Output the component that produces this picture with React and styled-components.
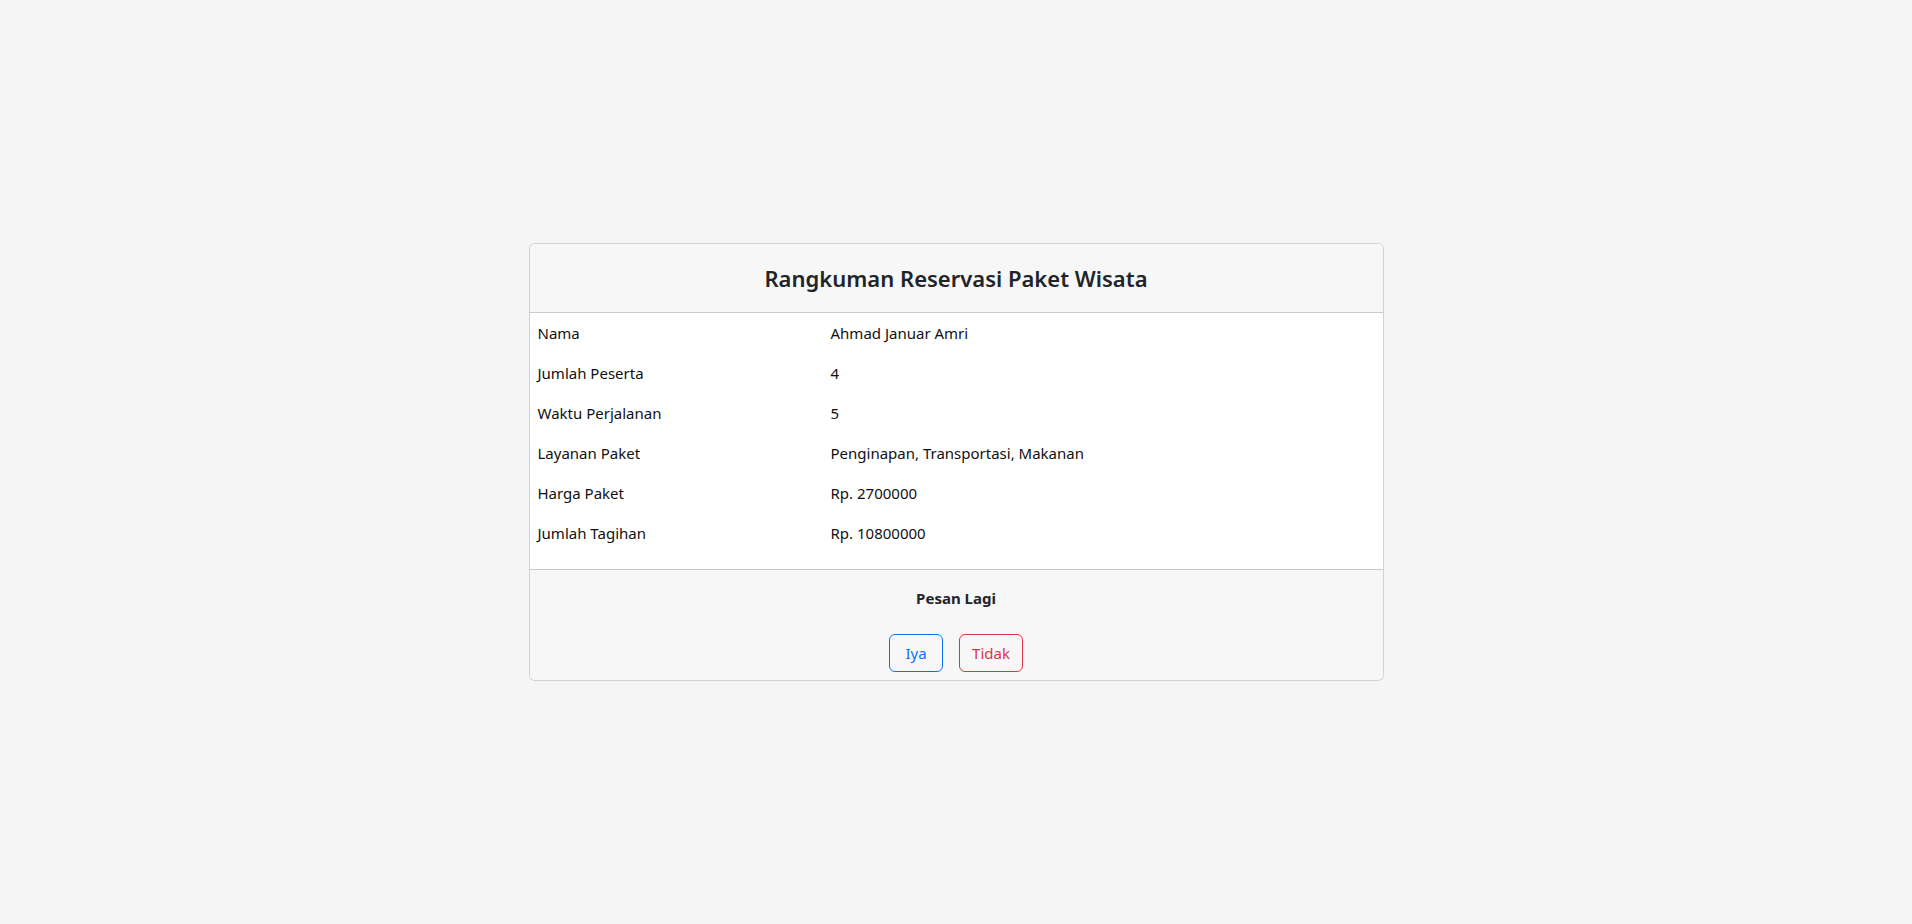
import React from "react";
import styled, { createGlobalStyle } from "styled-components";

const GlobalStyle = createGlobalStyle`
  html, body {
    margin: 0;
    padding: 0;
    height: 100%;
    background-color: #f5f5f5;
    font-family: "Noto Sans", "Open Sans", sans-serif;
    font-size: 15px;
    color: #212529;
  }
  #root {
    min-height: 100vh;
  }
`;

const Page = styled.div`
  min-height: 100vh;
  display: flex;
  align-items: center;
  justify-content: center;
`;

const Card = styled.div`
  box-sizing: border-box;
  width: 855px;
  background-color: #fff;
  border: 1px solid rgba(0, 0, 0, 0.175);
  border-radius: 6px;
  overflow: hidden;
`;

const CardHeader = styled.div`
  background-color: #f7f7f7;
  border-bottom: 1px solid rgba(0, 0, 0, 0.175);
  height: 68px;
  display: flex;
  align-items: center;
  justify-content: center;
  & h4 {
    margin: 0;
    font-size: 22px;
    font-weight: 600;
    line-height: 1.2;
  }
`;

const SummaryTable = styled.table`
  width: 100%;
  border-collapse: collapse;
  margin-bottom: 16px;
  & td {
    padding: 8px;
    line-height: 24px;
    vertical-align: top;
    color: #111;
  }
  & td.label {
    width: 277px;
  }
`;

const CardFooter = styled.div`
  background-color: #f7f7f7;
  border-top: 1px solid rgba(0, 0, 0, 0.175);
  padding: 16px 16px 8px;
  text-align: center;
  & p {
    margin: 0 0 24px;
    font-weight: bold;
    line-height: 24px;
  }
`;

const Actions = styled.div`
  display: flex;
  justify-content: center;
  gap: 16px;
`;

const OutlineButton = styled.button`
  font-family: inherit;
  font-size: 15px;
  line-height: 24px;
  padding: 6px 12px;
  min-width: ${(p) => p.$min}px;
  background: transparent;
  border: 1px solid ${(p) => p.$color};
  color: ${(p) => p.$color};
  border-radius: 6px;
  cursor: pointer;
`;

const rows = [
  ["Nama", "Ahmad Januar Amri"],
  ["Jumlah Peserta", "4"],
  ["Waktu Perjalanan", "5"],
  ["Layanan Paket", "Penginapan, Transportasi, Makanan"],
  ["Harga Paket", "Rp. 2700000"],
  ["Jumlah Tagihan", "Rp. 10800000"],
];

const App = () => {
  return (
    <>
      <GlobalStyle />
      <Page>
        <Card>
          <CardHeader>
            <h4>Rangkuman Reservasi Paket Wisata</h4>
          </CardHeader>
          <SummaryTable>
            <tbody>
              {rows.map(([label, value]) => (
                <tr key={label}>
                  <td className="label">{label}</td>
                  <td>{value}</td>
                </tr>
              ))}
            </tbody>
          </SummaryTable>
          <CardFooter>
            <p>Pesan Lagi</p>
            <Actions>
              <OutlineButton $color="#0d6efd" $min={54}>
                Iya
              </OutlineButton>
              <OutlineButton $color="#dc3545" $min={63}>
                Tidak
              </OutlineButton>
            </Actions>
          </CardFooter>
        </Card>
      </Page>
    </>
  );
};

export default App;
